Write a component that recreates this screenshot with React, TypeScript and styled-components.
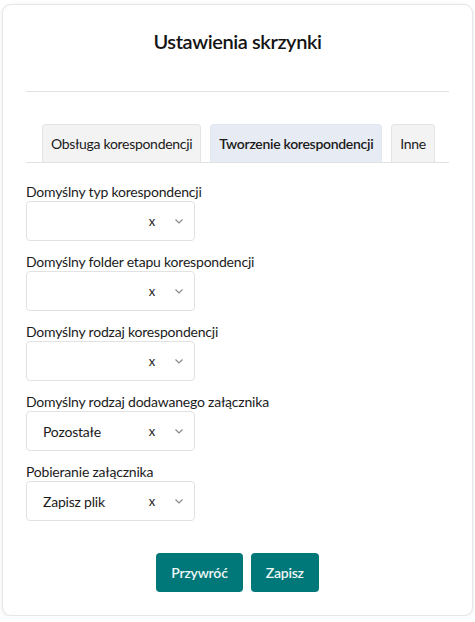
import React, { useState } from 'react'
import styled, { createGlobalStyle } from 'styled-components'

const GlobalStyle = createGlobalStyle`
  html, body {
    margin: 0;
    padding: 0;
    background: #ffffff;
  }
  body {
    font-family: Lato, "Noto Sans", "Liberation Sans", sans-serif;
    color: #1b1b1b;
    letter-spacing: -0.2px;
  }
  * {
    box-sizing: border-box;
  }
`

const Card = styled.div`
  margin: 4px 2px 0 2px;
  width: 471px;
  height: 612px;
  background: #fff;
  border: 1px solid #e6e6e6;
  border-radius: 9px;
  box-shadow: 0 1px 4px rgba(0, 0, 0, 0.08);
  padding: 0 23px 23px 23px;
  display: flex;
  flex-direction: column;
`

const Header = styled.div`
  border-bottom: 1px solid #e2e2e2;
  padding-top: 24px;
  padding-bottom: 38px;
  text-align: center;
`

const Title = styled.h2`
  margin: 0;
  font-size: 20px;
  line-height: 24px;
  font-weight: 600;
  letter-spacing: -0.4px;
  color: #141414;
`

const TabBar = styled.div`
  display: flex;
  gap: 9px;
  margin-top: 32px;
  padding-left: 16px;
  border-bottom: 1px solid #e2e2e2;
`

const Tab = styled.button<{ $active?: boolean }>`
  flex-shrink: 0;
  white-space: nowrap;
  height: 38px;
  padding: 0 8px;
  border: 1px solid ${p => (p.$active ? '#e3e7ef' : '#e4e4e4')};
  border-bottom: none;
  border-radius: 4px 4px 0 0;
  background: ${p => (p.$active ? '#e7ebf3' : '#f3f3f3')};
  font-family: inherit;
  font-size: 14px;
  letter-spacing: -0.3px;
  font-weight: ${p => (p.$active ? 600 : 400)};
  color: #1a1a1a;
  cursor: pointer;
`

const Form = styled.div`
  display: flex;
  flex-direction: column;
  gap: 12px;
  margin-top: 20px;
`

const Field = styled.div`
  display: flex;
  flex-direction: column;
`

const Label = styled.label`
  font-size: 14px;
  line-height: 18px;
  color: #1b1b1b;
`

const SelectBox = styled.div`
  width: 169px;
  height: 40px;
  border: 1px solid #e2e2e2;
  border-radius: 4px;
  display: flex;
  align-items: center;
  padding: 0 10px 0 16px;
  font-size: 14px;
`

const Value = styled.span`
  flex: 1;
  color: #1a1a1a;
`

const Clear = styled.span`
  width: 12px;
  font-size: 13px;
  color: #222;
  margin-right: 16px;
  text-align: center;
`

const Chevron = styled.svg`
  width: 10px;
  height: 10px;
`

const Buttons = styled.div`
  display: flex;
  justify-content: center;
  gap: 8px;
  margin-top: auto;
`

const Button = styled.button`
  height: 39px;
  padding: 0 15px;
  border: none;
  border-radius: 4px;
  background: #007778;
  color: #eef7f7;
  font-family: inherit;
  font-size: 14px;
  font-weight: 600;
  letter-spacing: -0.2px;
  cursor: pointer;
`

const fields = [
  { label: 'Domyślny typ korespondencji', value: '' },
  { label: 'Domyślny folder etapu korespondencji', value: '' },
  { label: 'Domyślny rodzaj korespondencji', value: '' },
  { label: 'Domyślny rodzaj dodawanego załącznika', value: 'Pozostałe' },
  { label: 'Pobieranie załącznika', value: 'Zapisz plik' },
]

const tabs = ['Obsługa korespondencji', 'Tworzenie korespondencji', 'Inne']

export default function App() {
  const [activeTab, setActiveTab] = useState(1)

  return (
    <>
      <GlobalStyle />
      <Card>
        <Header>
          <Title>Ustawienia skrzynki</Title>
        </Header>
        <TabBar>
          {tabs.map((t, i) => (
            <Tab key={t} $active={i === activeTab} onClick={() => setActiveTab(i)}>
              {t}
            </Tab>
          ))}
        </TabBar>
        <Form>
          {fields.map(f => (
            <Field key={f.label}>
              <Label>{f.label}</Label>
              <SelectBox>
                <Value>{f.value}</Value>
                <Clear>x</Clear>
                <Chevron viewBox="0 0 10 10">
                  <path d="M1.5 3.5 L5 7 L8.5 3.5" fill="none" stroke="#8a8a8a" strokeWidth="1.2" />
                </Chevron>
              </SelectBox>
            </Field>
          ))}
        </Form>
        <Buttons>
          <Button>Przywróć</Button>
          <Button>Zapisz</Button>
        </Buttons>
      </Card>
    </>
  )
}
